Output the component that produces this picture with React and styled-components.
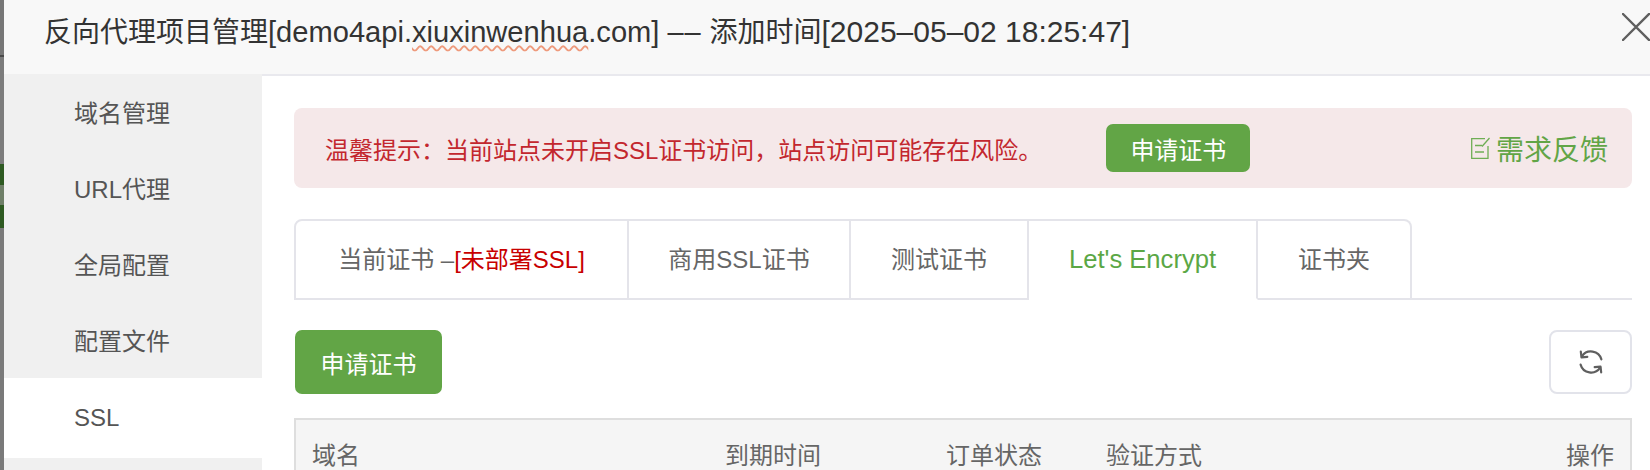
import React from "react";
import styled, { createGlobalStyle } from "styled-components";

const Global = createGlobalStyle`
  html, body { margin: 0; padding: 0; background: #fff; }
  body {
    font-family: "Liberation Sans", "Noto Sans CJK SC", sans-serif;
    overflow: hidden;
  }
`;

const Page = styled.div`
  display: flex;
  width: 1650px;
  height: 470px;
  overflow: hidden;
`;

const Backdrop = styled.div`
  display: flex;
  flex-direction: column;
  flex: 0 0 4px;
`;

const BackdropPart = styled.div`
  height: ${(p) => p.$h}px;
  flex: ${(p) => (p.$grow ? 1 : "none")};
  background: ${(p) => p.$c};
`;

const Dialog = styled.div`
  position: relative;
  flex: 1;
  display: flex;
  flex-direction: column;
  min-width: 0;
`;

const Header = styled.header`
  flex: 0 0 74px;
  display: flex;
  align-items: center;
  padding: 0 0 15px 40px;
  box-sizing: border-box;
  background: #f8f8f8;
  color: #333;
  font-size: 28px;
  white-space: nowrap;
`;

const Latin = styled.span`
  font-size: ${(p) => p.$size}px;
`;

const Dashes = styled.span`
  font-size: 29px;
  letter-spacing: 1px;
`;

const Squiggle = styled.span`
  text-decoration: underline wavy #ee9a7c 2px;
  text-underline-offset: 3px;
`;

const Close = styled.button`
  position: absolute;
  top: 13px;
  right: 0;
  width: 28px;
  height: 28px;
  padding: 0;
  border: 0;
  background: none;
  display: block;
`;

const Body = styled.div`
  flex: 1;
  display: flex;
  min-height: 0;
`;

const Sidebar = styled.nav`
  flex: 0 0 258px;
  background: #f0f0f0;
`;

const SideItem = styled.div`
  height: ${(p) => (p.$active ? 80 : 76)}px;
  display: flex;
  align-items: center;
  padding-left: 70px;
  padding-bottom: ${(p) => (p.$active ? 0 : 2)}px;
  box-sizing: border-box;
  font-size: 24px;
  color: #555;
  background: ${(p) => (p.$active ? "#fff" : "transparent")};
`;

const Content = styled.main`
  flex: 1;
  min-width: 0;
  border-top: 2px solid #e9e9ee;
  padding: 32px 18px 0 32px;
`;

const Alert = styled.div`
  height: 80px;
  display: flex;
  align-items: center;
  padding: 0 24px 0 31px;
  background: #f5e8e9;
  border-radius: 8px;
  font-size: 24px;
  color: #c3272e;
`;

const AlertText = styled.span`
  white-space: nowrap;
`;

const GreenButton = styled.button`
  flex: none;
  width: ${(p) => p.$w}px;
  height: ${(p) => p.$h}px;
  margin: 0;
  padding: 0;
  border: 0;
  border-radius: 7px;
  background: #62a546;
  color: #fff;
  font: inherit;
  font-size: 24px;
`;

const AlertButton = styled(GreenButton)`
  margin-left: 64px;
`;

const Feedback = styled.a`
  margin-left: auto;
  display: flex;
  align-items: center;
  gap: 5px;
  font-size: 28px;
  color: #62a546;
  white-space: nowrap;
`;

const Tabs = styled.div`
  margin-top: 31px;
  display: flex;
  height: 81px;
  border-bottom: 2px solid #e4e4ea;
  box-sizing: border-box;
`;

const Tab = styled.div`
  height: 81px;
  width: ${(p) => p.$w}px;
  box-sizing: border-box;
  display: flex;
  align-items: center;
  justify-content: center;
  padding-bottom: ${(p) => (p.$active ? 0 : 5)}px;
  white-space: nowrap;
  font-size: ${(p) => (p.$active ? 25.6 : 24)}px;
  color: ${(p) => (p.$active ? "#5ba745" : "#666")};
  background: #fff;
  border-top: 2px solid #e4e4ea;
  border-right: 2px solid #e4e4ea;
  border-bottom: 2px solid ${(p) => (p.$active ? "#fff" : "#e4e4ea")};
  ${(p) => p.$first && "border-left: 2px solid #e4e4ea; border-top-left-radius: 8px;"}
  ${(p) => p.$last && "border-top-right-radius: 8px;"}
`;

const Red = styled.span`
  color: #c80000;
`;

const Toolbar = styled.div`
  margin-top: 30px;
  padding-left: 1px;
  display: flex;
  justify-content: space-between;
  align-items: stretch;
`;

const IconButton = styled.button`
  width: 83px;
  height: 64px;
  padding: 0;
  border: 2px solid #e2e3ea;
  border-radius: 8px;
  background: #fff;
  display: flex;
  align-items: center;
  justify-content: center;
`;

const TableHead = styled.div`
  margin-top: 24px;
  display: grid;
  grid-template-columns: 413px 221px 160px 1fr auto;
  align-items: center;
  height: 68px;
  padding: 0 16px 0 16px;
  box-sizing: border-box;
  background: #f5f5f5;
  border: 2px solid #dedede;
  border-bottom: 0;
  font-size: 24px;
  color: #666;
`;

const items = ["域名管理", "URL代理", "全局配置", "配置文件", "SSL"];

export default function App() {
  return (
    <Page>
      <Global />
      <Backdrop>
        <BackdropPart $h={55} $c="#777" />
        <BackdropPart $h={2} $c="#4a4a4a" />
        <BackdropPart $h={107} $c="#7c7c7c" />
        <BackdropPart $h={21} $c="#2e5a22" />
        <BackdropPart $h={20} $c="#6f7f68" />
        <BackdropPart $h={23} $c="#2e5a22" />
        <BackdropPart $grow $c="#7a7a7a" />
      </Backdrop>
      <Dialog>
        <Header>
          <span>
            反向代理项目管理<Latin $size={29.1}>[demo4api.<Squiggle>xiuxinwenhua</Squiggle>.com] </Latin><Dashes>––</Dashes> 添加时间<Latin $size={30}>[2025–05–02 18:25:47]</Latin>
          </span>
        </Header>
        <Close aria-label="关闭">
          <svg width="28" height="28" viewBox="0 0 28 28" fill="none" stroke="#5f5f5f" strokeWidth="2.4" strokeLinecap="round">
            <path d="M1 1L30 30M1 27L30 -2" />
          </svg>
        </Close>
        <Body>
          <Sidebar>
            {items.map((t) => (
              <SideItem key={t} $active={t === "SSL"}>{t}</SideItem>
            ))}
          </Sidebar>
          <Content>
            <Alert>
              <AlertText>温馨提示：当前站点未开启SSL证书访问，站点访问可能存在风险。</AlertText>
              <AlertButton $w={144} $h={48}>申请证书</AlertButton>
              <Feedback>
                <svg width="21" height="23" viewBox="0 0 21 23" fill="none" stroke="#6fae55" strokeWidth="1.3">
                  <path d="M15 1.7H1.7V21.3H18V9" />
                  <path d="M5 8.5H12M5 15H14M12 9.5L19.5 1" />
                </svg>
                <span>需求反馈</span>
              </Feedback>
            </Alert>
            <Tabs>
              <Tab $first $w={335}>当前证书 –<Red>[未部署SSL]</Red></Tab>
              <Tab $w={222}>商用SSL证书</Tab>
              <Tab $w={178}>测试证书</Tab>
              <Tab $active $w={229}>Let's Encrypt</Tab>
              <Tab $last $w={154}>证书夹</Tab>
            </Tabs>
            <Toolbar>
              <GreenButton $w={147} $h={64}>申请证书</GreenButton>
              <IconButton aria-label="刷新">
                <svg width="26" height="26" viewBox="0 0 24 24" fill="none" stroke="#5f5f5f" strokeWidth="2" strokeLinecap="round" strokeLinejoin="round">
                  <path d="M3.6 6.8A10 10 0 0 1 21.6 9.6" />
                  <path d="M2.4 14.4A10 10 0 0 0 20.4 17.2" />
                  <path d="M2.6 2.4L3.2 7.8L8.6 7.2" />
                  <path d="M21.4 21.6L20.8 16.2L15.4 16.8" />
                </svg>
              </IconButton>
            </Toolbar>
            <TableHead>
              <span>域名</span>
              <span>到期时间</span>
              <span>订单状态</span>
              <span>验证方式</span>
              <span>操作</span>
            </TableHead>
          </Content>
        </Body>
      </Dialog>
    </Page>
  );
}
